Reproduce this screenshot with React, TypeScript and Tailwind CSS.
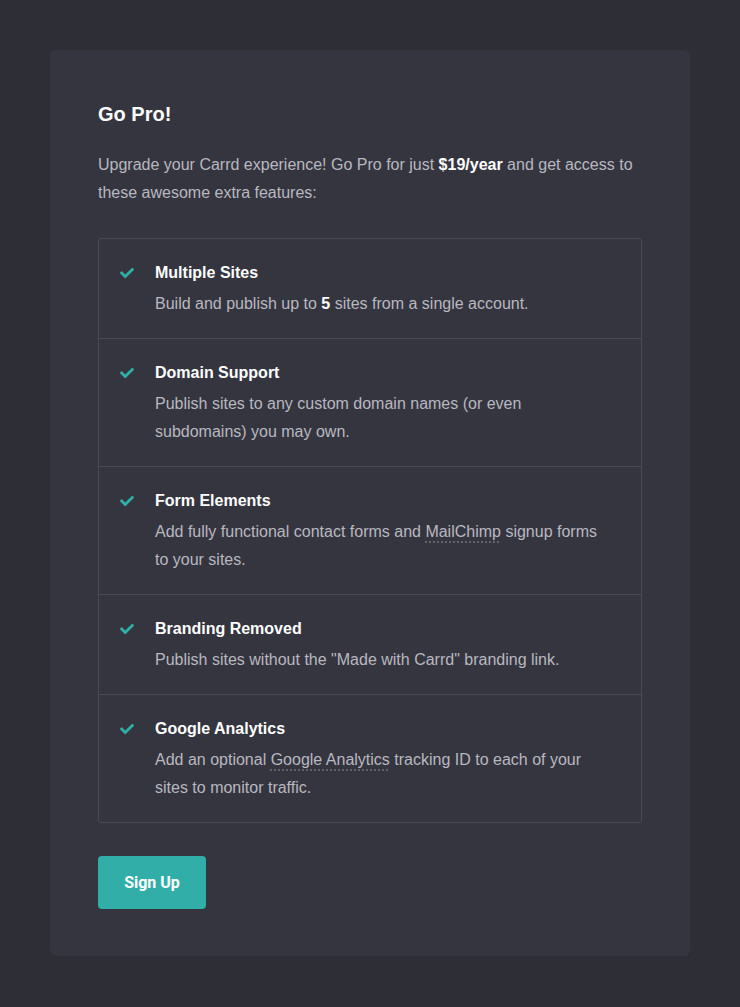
import React from "react";

const features = [
  {
    title: "Multiple Sites",
    body: (
      <>
        Build and publish up to <strong className="font-bold text-white">5</strong> sites from a single account.
      </>
    ),
  },
  {
    title: "Domain Support",
    body: <>Publish sites to any custom domain names (or even subdomains) you may own.</>,
  },
  {
    title: "Form Elements",
    body: (
      <>
        Add fully functional contact forms and{" "}
        <span className="underline decoration-dotted decoration-[#6f6f78] underline-offset-[5px]">MailChimp</span> signup
        forms to your sites.
      </>
    ),
  },
  {
    title: "Branding Removed",
    body: <>Publish sites without the "Made with Carrd" branding link.</>,
  },
  {
    title: "Google Analytics",
    body: (
      <>
        Add an optional{" "}
        <span className="underline decoration-dotted decoration-[#6f6f78] underline-offset-[5px]">Google Analytics</span>{" "}
        tracking ID to each of your sites to monitor traffic.
      </>
    ),
  },
];

const Check = () => (
  <svg viewBox="0 0 512 512" className="w-[14px] h-[14px] fill-[#32aea8]">
    <path d="M173.9 439.4 7.5 273c-10-10-10-26.2 0-36.2l36.2-36.2c10-10 26.2-10 36.2 0L192 312.7 432.1 72.6c10-10 26.2-10 36.2 0l36.2 36.2c10 10 10 26.2 0 36.2L210.1 439.4c-10 10-26.2 10-36.2 0z" />
  </svg>
);

const App = () => {
  return (
    <div className="min-h-[1007px] bg-[#2e2e37] pt-[50px] px-[50px] font-['Liberation_Sans',Arial,sans-serif]">
      <div className="bg-[#35353f] rounded-md pt-[49px] px-12 pb-[47px]">
        {/* TOP */}
        <h1 className="text-[20px] leading-[30px] font-bold text-white">Go Pro!</h1>
        <p className="mt-[22px] text-base leading-7 text-[#b8b8c0]">
          Upgrade your Carrd experience! Go Pro for just{" "}
          <strong className="font-bold text-white">$19/year</strong> and get access to these awesome extra features:
        </p>
        {/* LIST */}
        <div className="mt-[31px] border border-[#4a4a54] rounded-[3px]">
          {features.map((f, i) => (
            <div
              key={f.title}
              className={`flex pl-[21px] pr-10 pt-5 pb-5 ${i > 0 ? "border-t border-[#4a4a54]" : ""}`}
            >
              <div className="w-[35px] h-7 flex items-center shrink-0">
                <Check />
              </div>
              <div className="flex flex-col">
                <span className="text-base leading-7 font-bold text-white">{f.title}</span>
                <span className="mt-[3px] text-base leading-7 text-[#b8b8c0]">{f.body}</span>
              </div>
            </div>
          ))}
        </div>
        {/* BUTTON */}
        <button className="mt-[33px] w-[108px] h-[53px] rounded-[4px] bg-[#32aea8] text-white text-base font-bold font-['Roboto',sans-serif]">
          Sign Up
        </button>
      </div>
    </div>
  );
};

export default App;
